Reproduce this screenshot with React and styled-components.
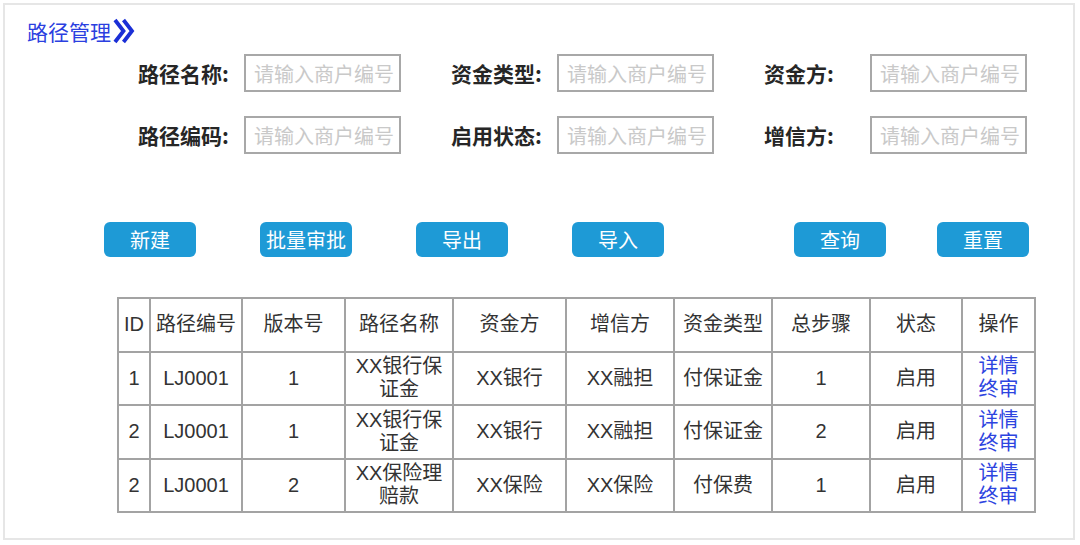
import React from "react";
import styled, { createGlobalStyle } from "styled-components";

const Global = createGlobalStyle`
  html, body { margin: 0; padding: 0; background: #ffffff; }
  body { font-family: "Liberation Sans", "Noto Sans CJK SC", sans-serif; }
  * { box-sizing: border-box; }
`;

const Page = styled.div`
  margin: 3px;
  width: 1072px;
  height: 537px;
  border: 2px solid #e6e6e6;
  background: #fff;
`;

const Header = styled.div`
  display: flex;
  align-items: center;
  padding: 12px 0 0 22px;
  height: 40px;
`;

const Title = styled.span`
  font-family: "Noto Sans CJK SC", sans-serif;
  font-size: 21px;
  line-height: 28px;
  color: #2b3fe0;
`;

const Chevron = styled.svg`
  width: 24px;
  height: 28px;
  margin-left: 1px;
`;

const Form = styled.div`
  display: grid;
  grid-template-columns: repeat(3, 263px);
  column-gap: 50px;
  row-gap: 24px;
  margin: 9px 0 0 133px;
`;

const Field = styled.div`
  display: flex;
  align-items: center;
  height: 38px;
`;

const Label = styled.label`
  width: 106px;
  font-family: "Noto Sans CJK SC", sans-serif;
  font-weight: 700;
  font-size: 21px;
  color: #262626;
  white-space: nowrap;
`;

const Input = styled.input`
  width: 157px;
  height: 38px;
  border: 2px solid #a8a8a8;
  padding: 0 0 0 8px;
  font-family: "Noto Sans CJK SC", sans-serif;
  font-size: 20px;
  color: #333;
  outline: none;
  background: #fff;
  &::placeholder { color: #c9c9c9; }
`;

const Actions = styled.div`
  display: flex;
  justify-content: space-between;
  width: 925px;
  margin: 68px 0 0 99px;
`;

const ButtonGroup = styled.div`
  display: flex;
  gap: ${(p) => p.$gap}px;
`;

const Button = styled.button`
  width: 92px;
  height: 35px;
  border: none;
  border-radius: 6px;
  background: #1e9ad6;
  color: #fff;
  font-family: "Noto Sans CJK SC", sans-serif;
  font-size: 20px;
  padding: 0;
  cursor: pointer;
`;

const Table = styled.table`
  margin: 40px 0 0 112px;
  width: 917px;
  table-layout: fixed;
  border-collapse: collapse;
  font-family: "Liberation Sans", "Noto Sans CJK SC", sans-serif;
  font-size: 20px;
  color: #333;
`;

const Cell = styled.td`
  border: 2px solid #a3a3a3;
  height: 53.5px;
  padding: 0 2px;
  text-align: center;
  vertical-align: middle;
  line-height: 23px;
  font-weight: 400;
`;

const HeadCell = styled(Cell).attrs({ as: "th" })``;

const Link = styled.a`
  display: block;
  color: #2d44e0;
  text-decoration: none;
  cursor: pointer;
`;

const cols = [32, 92, 103, 108, 113, 108, 98, 98, 92, 73];
const heads = ["ID", "路径编号", "版本号", "路径名称", "资金方", "增信方", "资金类型", "总步骤", "状态", "操作"];
const rows = [
  ["1", "LJ0001", "1", "XX银行保证金", "XX银行", "XX融担", "付保证金", "1", "启用"],
  ["2", "LJ0001", "1", "XX银行保证金", "XX银行", "XX融担", "付保证金", "2", "启用"],
  ["2", "LJ0001", "2", "XX保险理赔款", "XX保险", "XX保险", "付保费", "1", "启用"],
];

const fields = ["路径名称:", "资金类型:", "资金方:", "路径编码:", "启用状态:", "增信方:"];

export default function App() {
  return (
    <>
      <Global />
      <Page>
        <Header>
          <Title>路径管理</Title>
          <Chevron viewBox="0 0 24 28">
            <polyline points="3,3 11.5,14 3,25" fill="none" stroke="#1b2fd6" strokeWidth="3.8" strokeLinejoin="miter" />
            <polyline points="11.5,3 20,14 11.5,25" fill="none" stroke="#1b2fd6" strokeWidth="3.8" strokeLinejoin="miter" />
          </Chevron>
        </Header>
        <Form>
          {fields.map((l) => (
            <Field key={l}>
              <Label>{l}</Label>
              <Input placeholder="请输入商户编号" />
            </Field>
          ))}
        </Form>
        <Actions>
          <ButtonGroup $gap={64}>
            <Button>新建</Button>
            <Button>批量审批</Button>
            <Button>导出</Button>
            <Button>导入</Button>
          </ButtonGroup>
          <ButtonGroup $gap={51}>
            <Button>查询</Button>
            <Button>重置</Button>
          </ButtonGroup>
        </Actions>
        <Table>
          <colgroup>
            {cols.map((w, i) => (
              <col key={i} style={{ width: w }} />
            ))}
          </colgroup>
          <thead>
            <tr>
              {heads.map((h) => (
                <HeadCell key={h}>{h}</HeadCell>
              ))}
            </tr>
          </thead>
          <tbody>
            {rows.map((r, i) => (
              <tr key={i}>
                {r.map((c, j) => (
                  <Cell key={j}>{c}</Cell>
                ))}
                <Cell>
                  <Link>详情</Link>
                  <Link>终审</Link>
                </Cell>
              </tr>
            ))}
          </tbody>
        </Table>
      </Page>
    </>
  );
}
